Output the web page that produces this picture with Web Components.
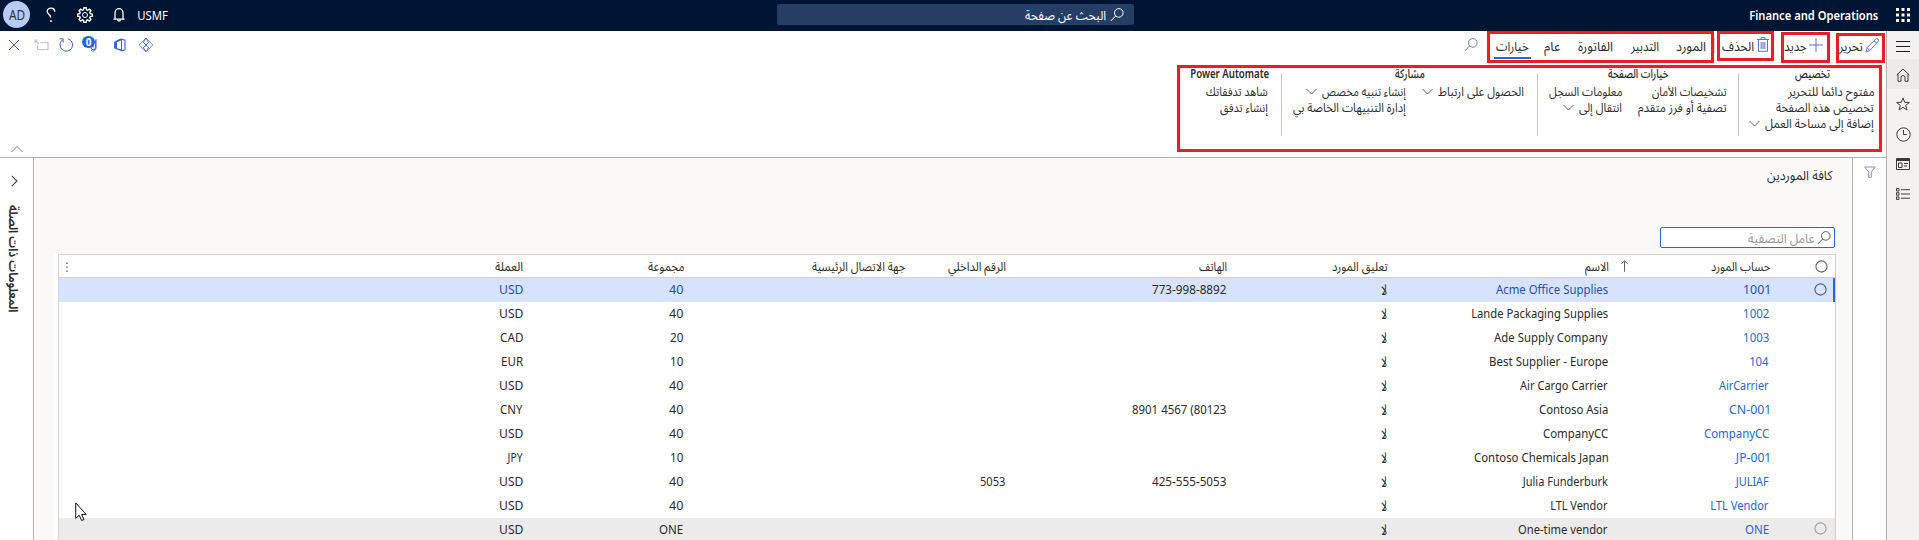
<!DOCTYPE html>
<html lang="ar">
<head>
<meta charset="utf-8">
<title>Finance and Operations</title>
<style>
body{margin:0;width:1919px;height:540px;overflow:hidden;background:#fff;font-family:"Noto Sans","Noto Sans Arabic","DejaVu Sans",sans-serif;font-size:13px;color:#2b2a28}
</style>
</head>
<body>
<fo-app></fo-app>
<script>
const measure = document.createElement('canvas').getContext('2d');

// Text whose inked width is set by the "w" attribute.
class FitText extends HTMLElement {
  connectedCallback() {
    if (this.shadowRoot) return;
    const r = this.attachShadow({mode: 'open'});
    const w = +this.getAttribute('w');
    r.innerHTML = `<style>:host{display:block;flex:none;direction:ltr;white-space:nowrap;width:${w}px}
      span{display:inline-block;transform-origin:0 50%;unicode-bidi:isolate}</style><span><slot></slot></span>`;
    const span = r.querySelector('span');
    const text = this.textContent;
    const rtl = /[\u0600-\u06ff]/.test(text);
    span.style.direction = rtl ? 'rtl' : 'ltr';
    const cs = getComputedStyle(this);
    measure.font = `${cs.fontWeight} ${cs.fontSize} ${cs.fontFamily}`;
    measure.direction = rtl ? 'rtl' : 'ltr';
    measure.textAlign = 'left';
    const m = measure.measureText(text);
    const k = w / (m.actualBoundingBoxLeft + m.actualBoundingBoxRight);
    span.style.transform = `translateX(${m.actualBoundingBoxLeft * k}px) scaleX(${k})`;
  }
}
customElements.define('fit-text', FitText);

const ICONS = {
  help: [16,16,'<path d="M11.800 4.800C11.800 2.600 10.200 1.200 8 1.200S4.200 2.500 4.200 4.500c0 2.600 3.500 3 3.500 6" stroke-width="1.300"/><path d="M8 13.300v1.700" stroke-width="1.600"/>'],
  gear: [16,16,'<circle cx="8" cy="8" r="2.500"/><path d="M6.900 1.200h2.200l.4 2 1.100.5 1.800-1.100 1.500 1.500-1.100 1.800.5 1.100 2 .4v2.200l-2 .4-.5 1.100 1.100 1.800-1.500 1.500-1.800-1.100-1.100.5-.4 2H6.900l-.4-2-1.100-.5-1.800 1.100-1.500-1.500 1.100-1.800-.5-1.100-2-.4V7.400l2-.4.5-1.100-1.100-1.800 1.500-1.500 1.800 1.100 1.100-.5z" transform="translate(0 -.4)" stroke-width="1.400"/>'],
  bell: [14,16,'<path d="M1.500 12.200h11M3 12V6a4 4.300 0 0 1 8 0v6M5.500 12.500a1.500 1.500 0 0 0 3 0" stroke-width="1.300"/>'],
  lens: [14,14,'<circle cx="8.800" cy="4.900" r="4.300"/><path d="M5.700 8L.7 13"/>'],
  waffle: [14,14,'<path d="M0 1.500h14M0 7h14M0 12.500h14" stroke-width="3" stroke-dasharray="3 2.500"/>'],
  close: [12,12,'<path d="M1 1l10 10M11 1L1 11"/>'],
  popout: [15,12,'<path d="M3.500 6v4.500H14V3.500H6M1 4V1h3M1 1l4 4" stroke-width="1.200"/>'],
  refresh: [16,16,'<path d="M10 1.800A6.300 6.300 0 1 1 4.300 3M1.500 1.800h3.700v3.700"/>'],
  clip: [9,14,'<path d="M2 3.500v6a2.300 2.300 0 0 0 4.600 0V2.500M4.200 4v5.500M7 1v9a3.200 3.200 0 0 1-5 2.500"/>'],
  office: [12,14,'<path d="M7 1l4 1.200v9.600L7 13" stroke-width="1.100"/><path d="M0 4l4.200-2.500L7 .6v1.800L3 4.200v6l4 1V13L1 10.800 0 10z" fill="currentColor" stroke="none"/><path d="M7.500 1v12"/>'],
  diamond: [14,14,'<path d="M7 .2L13.800 7 7 13.800.2 7zM3.700 3.700l6.600 6.600M10.300 3.700L3.700 10.300M7 .2L9.600 4.400 7 7 4.400 4.400zM7 13.800L9.600 9.600 7 7 4.400 9.600z" stroke-width=".8"/>'],
  up: [12,8,'<path d="M.5 7L6 1.500 11.500 7"/>'],
  right: [7,12,'<path d="M.8 .8L6 6 .8 11.200" stroke-width="1.100"/>'],
  down: [11,8,'<path d="M.5 1L5.500 6 10.500 1"/>'],
  pencil: [14,15,'<path d="M1 14l1.200-4.500L10.500 1.200a1.700 1.700 0 0 1 2.500 2.500L4.800 12.500zM2.200 9.500l2.600 3M9 2.700L11.700 5"/>'],
  plus: [14,14,'<path d="M7 0v14M0 7h14"/>'],
  trash: [12,15,'<path d="M0 2.500h12M4 2.500V.7h4v1.800M1.500 2.500v11.800h9V2.500M4.200 5v7M6 5v7M7.800 5v7"/>'],
  menu: [14,11,'<path d="M0 .5h14M0 5.500h14M0 10.500h14" stroke-width="1"/>'],
  home: [14,14,'<path d="M.6 7L7 1l6.400 6M2 6v7.300h3V9.500a2 2 0 0 1 4 0v3.800h3V6"/>'],
  star: [14,14,'<path d="M7 .9l1.700 4.400 4.700.2-3.700 2.900L11 13 7 10.300 3 13l1.300-4.600L.6 5.500l4.700-.2z"/>'],
  clock: [15,15,'<circle cx="7.500" cy="7.500" r="6.700"/><path d="M7.500 3v4.500h3.300"/>'],
  board: [14,12,'<path d="M.5.5h13v11H.5zM.5 2.500h13" /><path d="M.5 1.500h13" stroke-width="1.500"/><path d="M2.500 5h3.500v4.500H2.500zM8 5.500h4M8 8h3"/>'],
  list: [14,12,'<path d="M.5.5h2.500v2.500H.5zM.5 4.700h2.500v2.500H.5zM.5 8.900h2.500v2.500H.5zM5 1.700h9M5 6h9M5 10.200h9"/>'],
  funnel: [12,12,'<path d="M.7 1h10.600L7.300 6v5.300H4.700V6z"/>'],
  sort: [7,12,'<path d="M3.500 .8v11M.5 3.800l3-3 3 3"/>'],
  radio: [13,13,'<circle cx="6.500" cy="6.500" r="5.600" stroke-width="1.100"/>'],
  dots: [2,10,'<path d="M1 .5v10" stroke-width="2" stroke-dasharray="1.500 2.500"/>'],
  cursor: [12,19,'<path d="M.7 .9v15.500l3.500-3.200 2.400 5.300 2.300-1-2.300-5.100h4.600z" fill="#fff"/>']
};
class UiIcon extends HTMLElement {
  connectedCallback() {
    if (this.shadowRoot) return;
    const [w, h, d] = ICONS[this.getAttribute('name')];
    this.attachShadow({mode: 'open'}).innerHTML =
      `<style>:host{display:block;flex:none;width:${w}px;height:${h}px}svg{display:block;overflow:visible}</style>
       <svg width="${w}" height="${h}" viewBox="0 0 ${w} ${h}" fill="none" stroke="currentColor">${d}</svg>`;
  }
}
customElements.define('ui-icon', UiIcon);

const define = (name, html) => customElements.define(name, class extends HTMLElement {
  connectedCallback() {
    if (this.shadowRoot) return;
    const t = document.createElement('template');
    t.innerHTML = html;
    this.attachShadow({mode: 'open'}).append(t.content.cloneNode(true));
  }
});

define('top-bar', `<style>
:host{display:grid;grid-template-columns:777px 357px 1fr;height:31px;background:#001433;color:#fff;direction:ltr}
.l,.r{display:flex;align-items:flex-start}
.av{width:27px;height:27px;margin:1px 0 0 3px;border-radius:50%;background:#b6ccf7;color:#323130;display:flex;justify-content:center;font-size:14px;line-height:27px}
.l ui-icon{margin-top:7px}
.s{height:21px;margin-top:4px;border-radius:2px;background:#253e66;display:flex;direction:rtl;padding-right:10px;box-sizing:border-box;line-height:22px}
.s ui-icon{margin:4px 0 0 4px}
.r{justify-content:flex-end;font-weight:600;line-height:31px}
.r ui-icon{margin:8px 9px 0 18px}
</style>
<div class="l"><div class="av"><fit-text w="16">AD</fit-text></div><ui-icon name="help" style="margin-left:13px"></ui-icon><ui-icon name="gear" style="margin-left:18px"></ui-icon><ui-icon name="bell" style="margin-left:19px"></ui-icon><fit-text w="30" style="margin-left:12px;line-height:31px">USMF</fit-text></div>
<div class="s"><ui-icon name="lens"></ui-icon><fit-text w="81">البحث عن صفحة</fit-text></div>
<div class="r"><fit-text w="128">Finance and Operations</fit-text><ui-icon name="waffle"></ui-icon></div>`);

define('action-bar', `<style>
:host{display:flex;height:32px;direction:rtl;line-height:31px;padding-right:7px}
ui-icon{color:#5b6fd8}
.sel{position:relative}
.sel::after{content:"";position:absolute;left:-2px;width:37px;top:26px;height:2px;background:#2266e3}
.sep{width:1px;height:15px;margin:7px 7px 0 8px;background:#d2d0ce}
.left{display:flex;direction:ltr;margin-right:auto;padding-left:8px}
.left ui-icon{color:#3b62d8}
.badge{position:relative;width:16px;height:16px;margin:3px 0 0 8px}
.badge ui-icon{margin:4px 0 0 7px}
.badge b{position:absolute;left:0;top:2px;width:13px;height:12px;border-radius:6px;background:#2266e3;color:#fff;font-size:10px;line-height:12px;text-align:center}
</style>
<ui-icon name="pencil" style="margin-top:7px"></ui-icon><fit-text w="25" style="margin-right:2px">تحرير</fit-text>
<ui-icon name="plus" style="margin:7px 15px 0 0"></ui-icon><fit-text w="23" style="margin-right:2px">جديد</fit-text>
<ui-icon name="trash" style="margin:6px 15px 0 0"></ui-icon><fit-text w="32" style="margin-right:3px">الحذف</fit-text>
<div class="sep"></div>
<fit-text w="30">المورد</fit-text><fit-text w="29" style="margin-right:17px">التدبير</fit-text><fit-text w="35" style="margin-right:17px">الفاتورة</fit-text><fit-text w="17" style="margin-right:17px">عام</fit-text><div class="sel" style="margin-right:15px"><fit-text w="33">خيارات</fit-text></div>
<ui-icon name="lens" style="margin:7px 18px 0 0;color:#5b7be0"></ui-icon>
<div class="left"><ui-icon name="close" style="margin-top:8px"></ui-icon><ui-icon name="popout" style="margin:8px 0 0 14px;color:#c8c6c4"></ui-icon><ui-icon name="refresh" style="margin:6px 0 0 9px"></ui-icon>
<div class="badge"><ui-icon name="clip"></ui-icon><b>0</b></div><ui-icon name="office" style="margin:7px 0 0 16px"></ui-icon><ui-icon name="diamond" style="margin:7px 0 0 13px"></ui-icon></div>`);

define('ribbon-group', `<style>
:host{display:flex;flex:none;flex-direction:column;align-items:center;box-sizing:border-box;direction:rtl}
::slotted([slot=title]){font-weight:500;line-height:20px;margin-top:1px}
::slotted([slot=title][lang=en]){font-weight:600}
.cols{display:flex;width:100%;box-sizing:border-box;padding-right:var(--inset)}
</style><slot name="title"></slot><div class="cols"><slot></slot></div>`);

define('ribbon-item', `<style>
:host{display:flex;direction:rtl;height:16px;line-height:16px}
ui-icon{margin:4px 5px 0 0;color:#605e5c}
:host(:not([menu])) ui-icon{display:none}
</style><slot></slot><ui-icon name="down"></ui-icon>`);

define('ribbon-bar', `<style>
:host{display:flex;direction:rtl;height:94px;position:relative;border-bottom:1px solid #b3b0ad;box-sizing:content-box;font-size:12.500px}
i{width:1px;height:63px;background:#c8c6c4;margin-top:10px;flex:none}
.col{display:block}
ui-icon.up{position:absolute;left:11px;top:82px;color:#797775}
</style>
<ribbon-group style="width:147px;--inset:12px"><fit-text slot="title" w="35">تخصيص</fit-text><div class="col">
<ribbon-item><fit-text w="87">مفتوح دائما للتحرير</fit-text></ribbon-item><ribbon-item><fit-text w="98">تخصيص هذه الصفحة</fit-text></ribbon-item><ribbon-item menu><fit-text w="109">إضافة إلى مساحة العمل</fit-text></ribbon-item></div></ribbon-group><i></i>
<ribbon-group style="width:200px;--inset:11px"><fit-text slot="title" w="61">خيارات الصفحة</fit-text><div class="col" style="width:105px">
<ribbon-item><fit-text w="75">تشخيصات الأمان</fit-text></ribbon-item><ribbon-item><fit-text w="89">تصفية أو فرز متقدم</fit-text></ribbon-item></div><div class="col">
<ribbon-item><fit-text w="73">معلومات السجل</fit-text></ribbon-item><ribbon-item menu><fit-text w="43">انتقال إلى</fit-text></ribbon-item></div></ribbon-group><i></i>
<ribbon-group style="width:255px;--inset:13px"><fit-text slot="title" w="30">مشاركة</fit-text><div class="col" style="width:118px">
<ribbon-item menu><fit-text w="86">الحصول على ارتباط</fit-text></ribbon-item></div><div class="col">
<ribbon-item menu><fit-text w="84">إنشاء تنبيه مخصص</fit-text></ribbon-item><ribbon-item><fit-text w="113">إدارة التنبيهات الخاصة بي</fit-text></ribbon-item></div></ribbon-group><i></i>
<ribbon-group style="width:103px;--inset:13px"><fit-text slot="title" lang="en" w="78">Power Automate</fit-text><div class="col">
<ribbon-item><fit-text w="62">شاهد تدفقاتك</fit-text></ribbon-item><ribbon-item><fit-text w="48">إنشاء تدفق</fit-text></ribbon-item></div></ribbon-group>
<ui-icon class="up" name="up"></ui-icon>`);

define('nav-rail', `<style>
:host{display:flex;flex-direction:column;background:#f3f2f1;border-left:1px solid #b3b0ad;color:#3b3a39;box-sizing:border-box}
div{height:30px;display:flex;justify-content:center;align-items:center}
.m{height:28px;padding-top:2px;box-sizing:border-box;color:#201f1e}
.h{background:#edebe9;padding-top:2px;box-sizing:border-box}
</style><div class="m"><ui-icon name="menu"></ui-icon></div><div class="h"><ui-icon name="home"></ui-icon></div><div><ui-icon name="star"></ui-icon></div><div><ui-icon name="clock"></ui-icon></div><div><ui-icon name="board"></ui-icon></div><div><ui-icon name="list"></ui-icon></div>`);

define('related-pane', `<style>
:host{display:block;box-sizing:border-box;border-right:1px solid #b3b0ad;background:#fff;width:34px}
ui-icon{margin:17px 0 0 11px;color:#484644}
.v{width:20px;height:107px;margin:18px 0 0 4px}
.v fit-text{transform-origin:0 0;transform:translate(20px,0) rotate(90deg);font-weight:600;line-height:20px;font-size:13px}
</style><ui-icon name="right"></ui-icon><div class="v"><fit-text w="107">المعلومات ذات الصلة</fit-text></div>`);

const HEAD = [['حساب المورد',59],['الاسم',24],['تعليق المورد',56],['الهاتف',28],['الرقم الداخلي',58],['جهة الاتصال الرئيسية',93],['مجموعة',36],['العملة',28]];
const L = ['لا',6], U = ['USD',23], F = ['40',14];
const ROWS = [
 [['1001',25],['Acme Office Supplies',112],L,['773-998-8892',74],0,0,F,U],
 [['1002',25],['Lande Packaging Supplies',136],L,0,0,0,F,U],
 [['1003',25],['Ade Supply Company',114],L,0,0,0,['20',13],['CAD',23]],
 [['104',19],['Best Supplier - Europe',118],L,0,0,0,['10',12],['EUR',21]],
 [['AirCarrier',50],['Air Cargo Carrier',88],L,0,0,0,F,U],
 [['CN-001',40],['Contoso Asia',69],L,['8901 4567 (80123',94],0,0,F,['CNY',23]],
 [['CompanyCC',65],['CompanyCC',65],L,0,0,0,F,U],
 [['JP-001',35],['Contoso Chemicals Japan',134],L,0,0,0,['10',12],['JPY',17]],
 [['JULIAF',35],['Julia Funderburk',87],L,['425-555-5053',74],['5053',25],0,F,U],
 [['LTL Vendor',58],['LTL Vendor',57],L,0,0,0,F,U],
 [['ONE',24],['One-time vendor',90],L,0,0,0,['ONE',24],U]];
const cell = c => `<div class="c">${c ? `<fit-text w="${c[1]}">${c[0]}</fit-text>` : ''}</div>`;
define('vendor-grid', `<style>
:host{display:block;direction:rtl;border:1px solid #d2d0ce;border-bottom:0;background:#fff;box-sizing:border-box;box-shadow:-4px 0 #fff}
.row{display:grid;grid-template-columns:65px 161px 221px 161px 221px 101px 221px 161px 1fr;height:24px;line-height:22px;position:relative}
.head{height:22px;line-height:23px;border-bottom:1px solid #d2d0ce;font-size:12.500px}
.row:not(.head) .c{padding-right:1px}
.row:not(.head) .c:nth-child(9){padding-right:.5px}
.row:not(.head) .c:nth-child(4){padding-right:1.500px;font-size:15px}
.row:not(.head) .c:nth-child(2){color:#2266e3}
.c{display:flex}
.c ui-icon{color:#605e5c;margin-top:5px}
.c.r ui-icon{margin-right:7px}
.head .c:not(.r) ui-icon{margin-right:83px}
.sel{background:#d7e3fc;box-shadow:inset -2px 0 #2266e3}
.sel .c:nth-child(3),.sel .c:nth-child(8),.sel .c:nth-child(9),.row.sel:not(.head) .c:nth-child(2){color:#1d50b8}
.sel ui-icon{margin-top:5px}
.hov{background:#edebe9}
.hov ui-icon{color:#a19f9d;margin-top:4px}
.dots{position:absolute;left:7px;top:7px;color:#979593}
</style>
<div class="row head"><div class="c r"><ui-icon name="radio"></ui-icon></div>${HEAD.map((h, i) => i ? cell(h) : `<div class="c"><fit-text w="59">${h[0]}</fit-text><ui-icon name="sort"></ui-icon></div>`).join('')}<ui-icon class="dots" name="dots"></ui-icon></div>
${ROWS.map((r, i) => `<div class="row ${i === 0 ? 'sel' : i === 10 ? 'hov' : ''}"><div class="c r">${i % 10 ? '' : '<ui-icon name="radio"></ui-icon>'}</div>${r.map(cell).join('')}</div>`).join('')}`);

define('vendor-page', `<style>
:host{display:block;background:#faf9f8;direction:rtl;overflow:hidden}
.t{margin:6px 19px 0 0;font-size:13px;line-height:22px;height:22px;display:flex}
.f{width:175px;height:21px;box-sizing:border-box;border:1px solid #2266e3;border-radius:2px;background:#fff;margin:41px 17px 0 0;display:flex;padding-right:3px;color:#979593;line-height:21px}
.f ui-icon{margin:3px 0 0 2px;color:#605e5c}
vendor-grid{margin:6px 16px 0 24px}
</style><div class="t"><fit-text w="66">كافة الموردين</fit-text></div>
<div class="f"><ui-icon name="lens"></ui-icon><fit-text w="67">عامل التصفية</fit-text></div><vendor-grid></vendor-grid>`);

define('filter-strip', `<style>:host{display:block;border-left:1px solid #b3b0ad;background:#fff;box-sizing:border-box}ui-icon{margin:8px 0 0 11px;color:#8a86e0}</style><ui-icon name="funnel"></ui-icon>`);

// Red callout frame lying over the page.
customElements.define('call-out', class extends HTMLElement {
  connectedCallback() {
    const [x, y, w, h] = this.getAttribute('box').split(' ');
    this.attachShadow({mode: 'open'}).innerHTML = `<style>:host{position:absolute;left:${x}px;top:${y}px;width:${w}px;height:${h}px;border:3px solid #ee1c24;box-sizing:border-box}</style>`;
  }
});

define('fo-app', `<style>
:host{display:block;position:relative;width:1919px;height:540px;overflow:hidden}
.body{display:grid;grid-template-columns:1886px 33px;height:509px}
.work{display:grid;grid-template-columns:34px 1818px 34px;height:382px}
ui-icon.cur{position:absolute;left:75px;top:502px;color:#111}
</style>
<top-bar></top-bar>
<div class="body"><div><action-bar></action-bar><ribbon-bar></ribbon-bar><div class="work"><related-pane></related-pane><vendor-page></vendor-page><filter-strip></filter-strip></div></div><nav-rail></nav-rail></div>
<call-out box="1487 31 227 32"></call-out><call-out box="1717 31 57 30"></call-out><call-out box="1781 32 49 31"></call-out><call-out box="1836 33 49 30"></call-out><call-out box="1177 65 705 87"></call-out>
<ui-icon class="cur" name="cursor"></ui-icon>`);
</script>
</body>
</html>
